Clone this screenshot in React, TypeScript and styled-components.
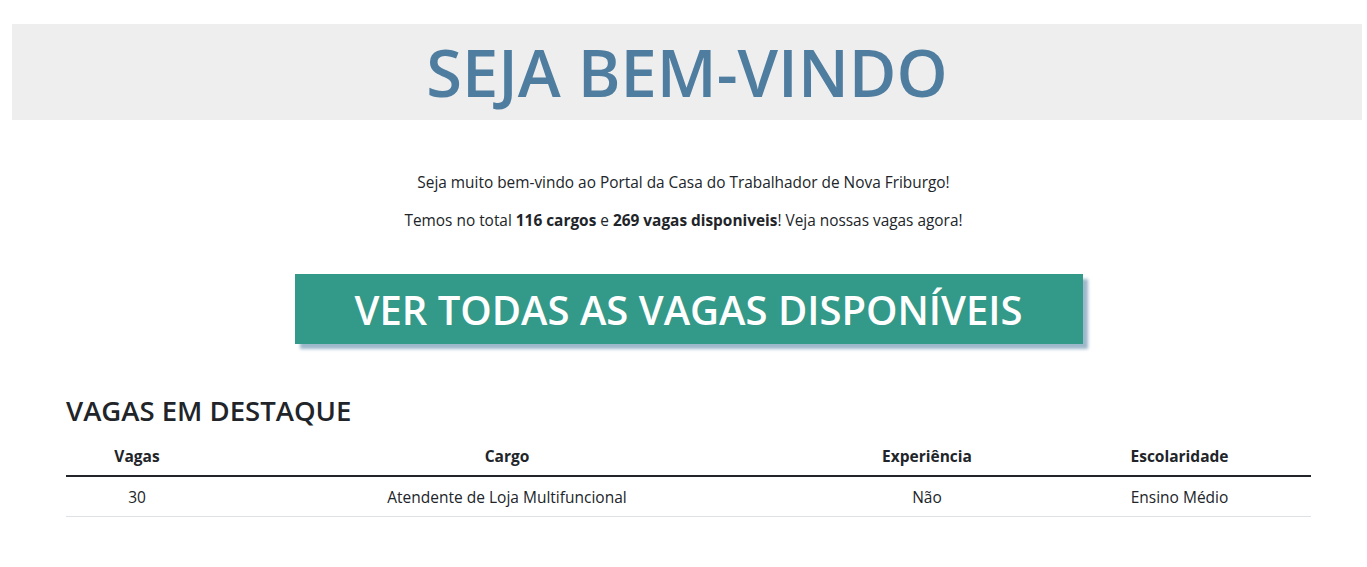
import React from "react";
import styled, { createGlobalStyle } from "styled-components";

const Global = createGlobalStyle`
  html, body { margin: 0; padding: 0; background: #fff; }
  body {
    font-family: "Open Sans", "Liberation Sans", sans-serif;
    color: #212529;
  }
`;

const Page = styled.div`
  padding-top: 24px;
  padding-bottom: 40px;
`;

const Hero = styled.header`
  margin: 0 5px 0 12px;
  height: 96px;
  background: #eeeeee;
  display: flex;
  align-items: center;
  justify-content: center;
`;

const HeroTitle = styled.h1`
  margin: 0;
  font-size: 65px;
  line-height: 1;
  font-weight: 600;
  color: #4f7da0;
`;

const Intro = styled.section`
  margin-top: 52px;
  display: flex;
  flex-direction: column;
  align-items: center;
  gap: 16px;
`;

const Lead = styled.p`
  margin: 0;
  font-size: 15.4px;
  line-height: 22px;
  text-align: center;
`;

const CtaRow = styled.div`
  margin-top: 42px;
  display: flex;
  justify-content: center;
  padding-left: 10px;
`;

const CtaButton = styled.a`
  width: 788px;
  height: 70px;
  display: flex;
  align-items: center;
  justify-content: center;
  background: #339988;
  color: #ffffff;
  font-size: 40px;
  font-weight: 600;
  text-decoration: none;
  box-shadow: 5px 5px 3px rgba(79, 125, 160, 0.55);
  cursor: pointer;
`;

const Featured = styled.section`
  margin: 50px 56px 0 66px;
`;

const SectionTitle = styled.h2`
  margin: 0 0 9px;
  font-size: 27.5px;
  line-height: 34px;
  font-weight: 600;
  color: #212529;
`;

const Table = styled.table`
  width: 100%;
  border-collapse: collapse;
  table-layout: fixed;
  font-size: 15.5px;
`;

const Th = styled.th<{ $w: number }>`
  width: ${(p) => p.$w}px;
  height: 38px;
  padding: 0;
  text-align: center;
  vertical-align: middle;
  font-weight: 700;
  border-bottom: 2px solid #212529;
`;

const Td = styled.td`
  height: 39px;
  padding: 0;
  text-align: center;
  vertical-align: middle;
  border-bottom: 1px solid #dee2e6;
`;

const columns = [
  { label: "Vagas", w: 142 },
  { label: "Cargo", w: 598 },
  { label: "Experiência", w: 242 },
  { label: "Escolaridade", w: 263 },
];

const rows = [["30", "Atendente de Loja Multifuncional", "Não", "Ensino Médio"]];

export default function App() {
  return (
    <Page>
      <Global />
      <Hero>
        <HeroTitle>SEJA BEM-VINDO</HeroTitle>
      </Hero>
      <Intro>
        <Lead>Seja muito bem-vindo ao Portal da Casa do Trabalhador de Nova Friburgo!</Lead>
        <Lead>
          Temos no total <b>116 cargos</b> e <b>269 vagas disponiveis</b>! Veja nossas vagas agora!
        </Lead>
      </Intro>
      <CtaRow>
        <CtaButton>VER TODAS AS VAGAS DISPONÍVEIS</CtaButton>
      </CtaRow>
      <Featured>
        <SectionTitle>VAGAS EM DESTAQUE</SectionTitle>
        <Table>
          <thead>
            <tr>
              {columns.map((c) => (
                <Th key={c.label} $w={c.w}>
                  {c.label}
                </Th>
              ))}
            </tr>
          </thead>
          <tbody>
            {rows.map((r, i) => (
              <tr key={i}>
                {r.map((cell, j) => (
                  <Td key={j}>{cell}</Td>
                ))}
              </tr>
            ))}
          </tbody>
        </Table>
      </Featured>
    </Page>
  );
}
